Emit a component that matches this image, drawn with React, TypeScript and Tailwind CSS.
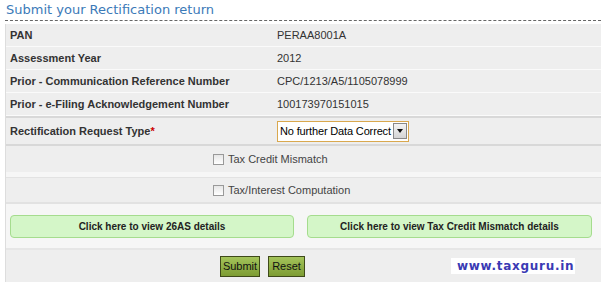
const infoRows = [
  { label: 'PAN', value: 'PERAA8001A' },
  { label: 'Assessment Year', value: '2012' },
  { label: 'Prior - Communication Reference Number', value: 'CPC/1213/A5/1105078999' },
  { label: 'Prior - e-Filing Acknowledgement Number', value: '100173970151015' },
];

const Check = ({ label }: { label: string }) => (
  <div className="flex items-center ml-[207px] gap-[4px] text-[11px] text-[#444]">
    <span className="w-[11px] h-[11px] border border-[#999] bg-gradient-to-b from-[#e6e6e6] to-[#fff] inline-block" />
    <span>{label}</span>
  </div>
);

const App = () => {
  return (
    <div className="w-[601px] h-[282px] bg-white overflow-hidden font-['Liberation_Sans',Arial,sans-serif]">
      <h2 className="pl-[6px] pt-[2px] h-[20px] text-[13px] leading-[16px] text-[#3b7ab8] font-['DejaVu_Sans',sans-serif]">
        Submit your Rectification return
      </h2>
      <div className="ml-[5px] border-t border-dashed border-[#666]">
        <div className="border-l border-[#ddd] mt-[3px]">
          {infoRows.map((row) => (
            <div key={row.label} className="flex items-center h-[23px] bg-[#eeeeee] border-b border-[#fafafa] text-[11px] text-[#333]">
              <span className="w-[271px] pl-[4px] font-bold">{row.label}</span>
              <span>{row.value}</span>
            </div>
          ))}
          <div className="flex items-center h-[30px] bg-[#eeeeee] border-t-2 border-b-2 border-[#d8d8d8] text-[11px] text-[#333]">
            <span className="w-[271px] pl-[4px] font-bold">
              Rectification Request Type<span className="text-[#cc0000]">*</span>
            </span>
            <div className="flex items-center h-[21px] w-[132px] border border-[#d9a84e] bg-white pl-[2px] pr-[1px]">
              <span className="flex-1 text-[11px] tracking-[-0.15px] text-black whitespace-nowrap">No further Data Correct</span>
              <span className="w-[14px] h-[16px] shrink-0 border border-[#888] bg-gradient-to-b from-[#f4f4f4] to-[#d4d4d4] flex items-center justify-center">
                <span className="w-0 h-0 border-l-[3px] border-r-[3px] border-t-[4px] border-l-transparent border-r-transparent border-t-[#111]" />
              </span>
            </div>
          </div>
          <div className="flex items-center h-[26px] bg-[#eeeeee]">
            <Check label="Tax Credit Mismatch" />
          </div>
          <div className="h-[6px] bg-[#f6f6f6] border-b border-[#e2e2e2]" />
          <div className="flex items-center h-[26px] bg-[#eeeeee] border-b-2 border-[#e2e2e2]">
            <Check label="Tax/Interest Computation" />
          </div>
          <div className="flex items-center gap-[13px] h-[46px] bg-[#f6f6f6] pl-[4px] border-b-2 border-[#e6e6e6]">
            <button className="w-[284px] h-[23px] rounded-[4px] border border-[#a5dc8e] bg-[#d4f6c8] text-[10px] font-bold text-[#222]">
              Click here to view 26AS details
            </button>
            <button className="w-[285px] h-[23px] rounded-[4px] border border-[#a5dc8e] bg-[#d4f6c8] text-[10px] font-bold text-[#222]">
              Click here to view Tax Credit Mismatch details
            </button>
          </div>
          <div className="flex items-center h-[32px] bg-[#eeeeee]">
            <div className="flex items-center gap-[8px] ml-[214px]">
              <button className="w-[40px] h-[21px] border border-[#3f4a1a] bg-gradient-to-b from-[#a4c45a] to-[#7d9c33] text-[11px] text-[#111]">
                Submit
              </button>
              <button className="w-[37px] h-[21px] border border-[#3f4a1a] bg-gradient-to-b from-[#a4c45a] to-[#7d9c33] text-[11px] text-[#111]">
                Reset
              </button>
            </div>
            <span className="ml-[146px] bg-white pl-[6px] w-[124px] text-[12px] leading-[16px] font-bold text-[#3a3ab4] tracking-[0.7px] font-['DejaVu_Sans',sans-serif]">
              www.taxguru.in
            </span>
          </div>
        </div>
      </div>
    </div>
  );
};

export default App;
